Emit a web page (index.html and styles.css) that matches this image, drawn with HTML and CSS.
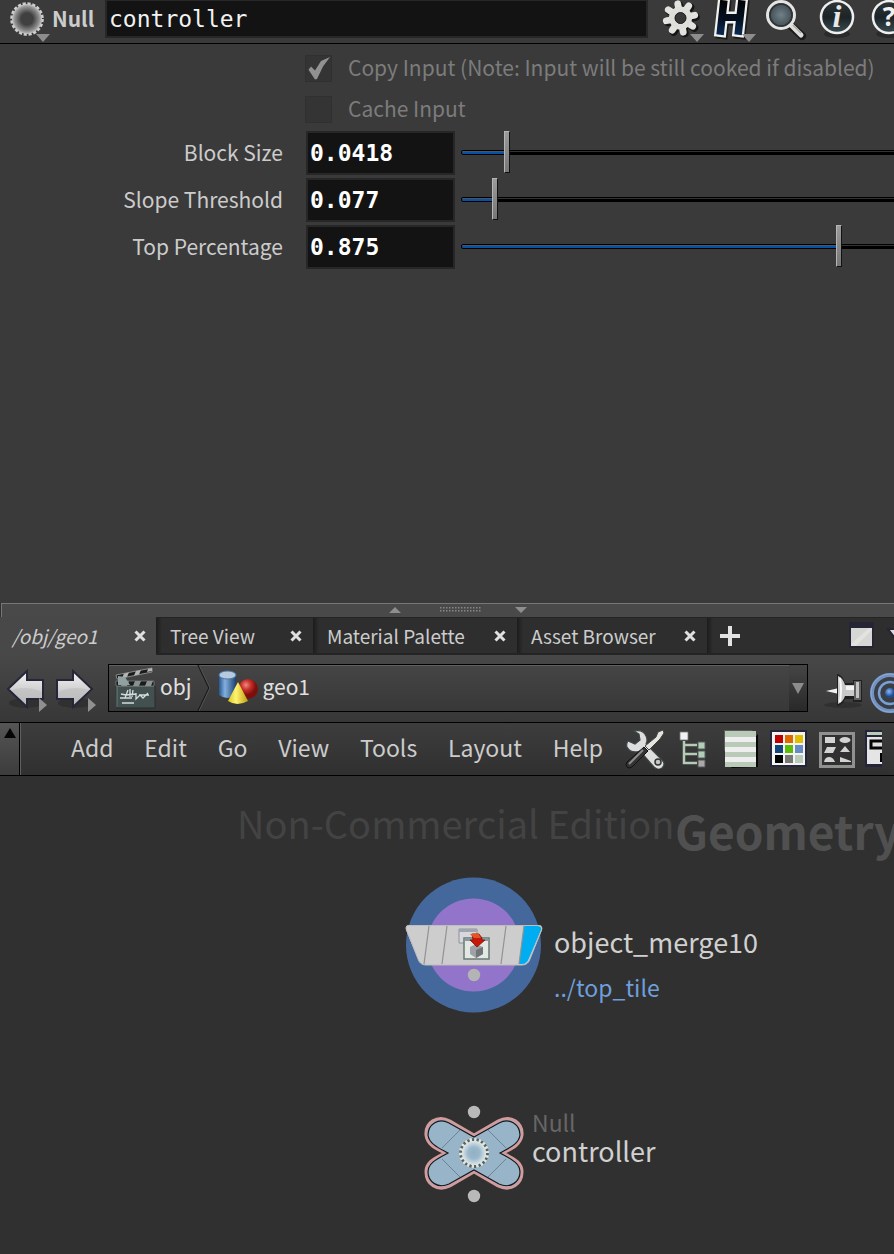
FILE: index.html
```html
<!DOCTYPE html>
<html lang="en">
<head>
<meta charset="utf-8">
<meta name="viewport" content="width=device-width, initial-scale=1">
<title>Geometry network</title>
<link rel="stylesheet" href="styles.css">
</head>
<body>
<svg class="defs" width="0" height="0" aria-hidden="true">
  <defs>
    <radialGradient id="ring"><stop offset="0.4" stop-color="#404040"/><stop offset="0.8" stop-color="#8c8c8c"/><stop offset="1" stop-color="#c4c4c4"/></radialGradient>
    <radialGradient id="ringBlue"><stop offset="0" stop-color="#91b0c4"/><stop offset="0.45" stop-color="#9ab8ca"/><stop offset="0.85" stop-color="#d3dfe6"/><stop offset="1" stop-color="#e4ebee"/></radialGradient>
    <linearGradient id="steel" x2="0" y2="1"><stop offset="0" stop-color="#f4f4f4"/><stop offset="0.55" stop-color="#cfcfcf"/><stop offset="1" stop-color="#b4b4b4"/></linearGradient>
    <linearGradient id="navy" gradientUnits="userSpaceOnUse" x1="0" y1="0" x2="0" y2="36"><stop offset="0" stop-color="#020305"/><stop offset="0.5" stop-color="#04101f"/><stop offset="1" stop-color="#0b2c58"/></linearGradient>
    <radialGradient id="lens"><stop offset="0" stop-color="#718088"/><stop offset="1" stop-color="#3c464c"/></radialGradient>
    <linearGradient id="disc" x2="0" y2="1"><stop offset="0" stop-color="#303638"/><stop offset="0.5" stop-color="#1b2427"/><stop offset="1" stop-color="#394c50"/></linearGradient>
    <linearGradient id="can"><stop offset="0" stop-color="#27578f"/><stop offset="0.35" stop-color="#84b0df"/><stop offset="1" stop-color="#1c416f"/></linearGradient>
    <radialGradient id="ball" cx="0.4" cy="0.3"><stop offset="0" stop-color="#ef8a80"/><stop offset="0.5" stop-color="#c62f28"/><stop offset="1" stop-color="#7c0f0d"/></radialGradient>
    <linearGradient id="cone"><stop offset="0" stop-color="#d8c41e"/><stop offset="0.4" stop-color="#fff372"/><stop offset="1" stop-color="#bd9d0c"/></linearGradient>
    <radialGradient id="dot" cx="0.4" cy="0.35"><stop offset="0" stop-color="#8db8ee"/><stop offset="1" stop-color="#1c4c98"/></radialGradient>
  </defs>
</svg>
<div class="app">
  <section class="params" aria-label="Parameters">
    <header class="titlebar">
      <svg class="type-icon" width="44" height="43" viewBox="0 0 44 43" aria-hidden="true">
        <circle cx="19" cy="19" r="15" fill="url(#ring)"/>
        <circle cx="19" cy="19" r="15.6" fill="none" stroke="#cecece" stroke-width="2.4" stroke-dasharray="3.2 1.7"/>
        <path d="M28 34h14l-7 8z" fill="#8d8d8d"/>
      </svg>
      <label class="type-name" for="node-name">Null</label>
      <input class="name-field" id="node-name" type="text" value="controller" spellcheck="false">
      <div class="title-tools">
        <button type="button" aria-label="Gear menu"><svg width="44" height="43" viewBox="0 0 44 43">
          <g transform="translate(22 19.500)" stroke="#141414" stroke-width="8" stroke-linecap="round"><path d="M0-9V-14M0 9V14M-9 0H-14M9 0H14M6.400-6.400L10.500-10.500M-6.400-6.400L-10.500-10.500M6.400 6.400L10.500 10.500M-6.400 6.400L-10.500 10.500" transform="rotate(-11)"/></g>
          <g transform="translate(20.500 18)"><g stroke="#e2e2df" stroke-width="6.800" stroke-linecap="round"><path d="M0-9V-14.500M0 9V14.500M-9 0H-14.500M9 0H14.500M6.400-6.400L10.400-10.400M-6.400-6.400L-10.400-10.400M6.400 6.400L10.400 10.400M-6.400 6.400L-10.400 10.400" transform="rotate(-11)"/></g>
          <circle r="8.500" fill="#3b3b3b" stroke="#dededb" stroke-width="6"/><circle r="5.500" fill="#383838" stroke="#222" stroke-width="1"/></g>
          <path d="M30 34h14l-7 8z" fill="#8d8d8d"/></svg></button>
        <button type="button" aria-label="Houdini menu"><svg width="44" height="43" viewBox="0 0 44 43">
          <path d="M11.500 4L8.500 31M29.500 4L26.500 31M11 17.500H27" transform="translate(1.500 2)" fill="none" stroke="#1c1c1c" stroke-width="12" stroke-linecap="square"/>
          <path d="M11.500 4L8.500 31M29.500 4L26.500 31M11 17.500H27" fill="none" stroke="#f2f2f0" stroke-width="12" stroke-linecap="square"/>
          <path d="M11.500 4L8.500 31M29.500 4L26.500 31" fill="none" stroke="url(#navy)" stroke-width="7.500" stroke-linecap="square"/>
          <path d="M10 17.500H28" stroke="#050e1c" stroke-width="7"/>
          <path d="M30 34h14l-7 8z" fill="#8d8d8d"/></svg></button>
        <button type="button" aria-label="Search"><svg width="44" height="43" viewBox="0 0 44 43">
          <path d="M26 25L38 36" stroke="#1c1c1c" stroke-width="8" stroke-linecap="round"/>
          <path d="M26 24L37 35" stroke="#deddda" stroke-width="5" stroke-linecap="round"/><path d="M29 25L37 33" stroke="#a9a9a4" stroke-width="1.500"/>
          <circle cx="17" cy="15" r="13.500" fill="url(#lens)" stroke="#e4e4e2" stroke-width="3"/><circle cx="17" cy="15" r="11" fill="none" stroke="#2c3336" stroke-width="1.500"/></svg></button>
        <button type="button" aria-label="Info"><svg width="44" height="43" viewBox="0 0 44 43">
          <ellipse cx="21" cy="34" rx="13" ry="4" fill="#2a2a2a"/><circle cx="21" cy="17" r="16" fill="url(#disc)" stroke="#efefef" stroke-width="2.500"/>
          <text class="glyph-i" x="21" y="27">i</text></svg></button>
        <button type="button" aria-label="Help"><svg width="44" height="43" viewBox="0 0 44 43">
          <ellipse cx="21" cy="34" rx="13" ry="4" fill="#2a2a2a"/><circle cx="21" cy="17" r="16" fill="url(#disc)" stroke="#efefef" stroke-width="2.500"/>
          <text class="glyph-q" x="21" y="26">?</text></svg></button>
      </div>
    </header>

    <form class="param-list">
      <div class="check-row">
        <input class="check" id="copy" type="checkbox" checked disabled>
        <label for="copy">Copy Input (Note: Input will be still cooked if disabled)</label>
      </div>
      <div class="check-row">
        <input class="check" id="cache" type="checkbox" disabled>
        <label for="cache">Cache Input</label>
      </div>
      <div class="param-row">
        <label for="block">Block Size</label>
        <input class="num" id="block" type="text" value="0.0418">
        <input class="slider" type="range" aria-label="Block Size" min="0" max="0.42" step="any" value="0.0418" style="--fill: 10%">
      </div>
      <div class="param-row">
        <label for="slope">Slope Threshold</label>
        <input class="num" id="slope" type="text" value="0.077">
        <input class="slider" type="range" aria-label="Slope Threshold" min="0" max="1.08" step="any" value="0.077" style="--fill: 7.1%">
      </div>
      <div class="param-row">
        <label for="top">Top Percentage</label>
        <input class="num" id="top" type="text" value="0.875">
        <input class="slider" type="range" aria-label="Top Percentage" min="0" max="1" step="any" value="0.875" style="--fill: 87.5%">
      </div>
    </form>
  </section>

  <div class="splitter" role="separator">
    <svg width="138" height="12" viewBox="0 0 138 12" aria-hidden="true">
      <defs><pattern id="grip" width="3" height="3" patternUnits="userSpaceOnUse"><rect width="1.500" height="1.500" fill="#858585"/></pattern></defs>
      <path d="M0 9h12L6 3zM126 3h12l-6 6z" fill="#8e8e8e"/>
      <rect x="51" y="3" width="42" height="6" fill="url(#grip)"/>
    </svg>
  </div>

  <nav class="tabs" aria-label="Pane tabs">
    <div class="tab tab-path active"><a href="#net">/obj/geo1</a><button type="button" class="close" aria-label="Close /obj/geo1"><svg width="12" height="12" viewBox="0 0 12 12"><path d="M1.500 1.500l9 9M10.500 1.500l-9 9"/></svg></button></div>
    <div class="tab tab-tree"><a href="#tree">Tree View</a><button type="button" class="close" aria-label="Close Tree View"><svg width="12" height="12" viewBox="0 0 12 12"><path d="M1.500 1.500l9 9M10.500 1.500l-9 9"/></svg></button></div>
    <div class="tab tab-material"><a href="#material">Material Palette</a><button type="button" class="close" aria-label="Close Material Palette"><svg width="12" height="12" viewBox="0 0 12 12"><path d="M1.500 1.500l9 9M10.500 1.500l-9 9"/></svg></button></div>
    <div class="tab tab-asset"><a href="#asset">Asset Browser</a><button type="button" class="close" aria-label="Close Asset Browser"><svg width="12" height="12" viewBox="0 0 12 12"><path d="M1.500 1.500l9 9M10.500 1.500l-9 9"/></svg></button></div>
    <div class="tab-tail">
      <button type="button" aria-label="New tab"><svg width="20" height="20" viewBox="0 0 20 20"><path d="M10 0v20M0 10h20" stroke="#e2e2e2" stroke-width="4"/></svg></button>
      <button type="button" class="maximize" aria-label="Maximize pane"><svg width="45" height="38" viewBox="0 0 45 38">
        <rect y="5" width="25" height="26" fill="#252535"/><rect x="2" y="11" width="21" height="18" fill="#d6d6d4"/><path d="M2 29V27L20 11h3v2L7 29z" fill="#e2e2de"/>
        <path d="M39 12h12l-6 8z" fill="#dcdcdc" stroke="#252535" stroke-width="2"/></svg></button>
    </div>
  </nav>

  <div class="pathbar">
    <button type="button" aria-label="Back"><svg width="41" height="48" viewBox="0 4 41 48">
      <ellipse cx="19" cy="38" rx="17" ry="5" fill="#303030"/><path d="M1 24L20 6V15H36V34H20V42z" fill="url(#steel)" stroke="#26263a" stroke-width="2"/><path d="M4 25Q20 20 35 27V33H19V39z" fill="#bdbdbd" opacity=".6"/><path d="M32 33v14l8-7z" fill="#909090"/></svg></button>
    <button type="button" aria-label="Forward"><svg width="41" height="48" viewBox="0 4 41 48">
      <ellipse cx="19" cy="38" rx="17" ry="5" fill="#303030"/><path d="M36 24L17 6V15H1V34H17V42z" fill="url(#steel)" stroke="#26263a" stroke-width="2"/><path d="M33 25Q17 20 2 27V33H18V39z" fill="#bdbdbd" opacity=".6"/><path d="M32 33v14l8-7z" fill="#909090"/></svg></button>
    <div class="path-field">
      <a class="crumb" href="#obj"><svg width="42" height="46" viewBox="0 0 42 46">
        <path d="M1 21h39v22H2z" fill="#435050" stroke="#242d2e"/><path d="M1 21h38M2 22v20" stroke="#6e7e7e"/>
        <path d="M1 16h38v5H1z" fill="#191b1b" stroke="#858d8d" stroke-width=".7"/><path d="M8 16h6l-2 5H6zM20 16h6l-2 5h-6zM32 16h6l-2 5h-6z" fill="#8a9090"/>
        <path d="M1 10L37 3v4L2 14z" fill="#191b1b" stroke="#a0a0a0" stroke-width=".8"/><path d="M9 8.500l5-1-2 4.500-5 1zM21 6l5-1-2 4.500-5 1zM33 4l4-1v3l-5 1z" fill="#b4b4b4"/>
        <path d="M3 11l7 1 5 8H3z" fill="#91a0a0"/>
        <path d="M6 29l5 1 10-1M13 25l-3 8M15 24v8M18 25l-1 7M21 28v6l4-4 3 3 5-5M5 33h12M24 30h10M7 38h12" fill="none" stroke="#d5dcdc" stroke-width="1.300"/></svg>obj</a>
      <svg class="chevron" width="14" height="46" viewBox="0 0 14 46" aria-hidden="true"><path d="M1 0l11 23L1 46" fill="none" stroke="#1b1b1b" stroke-width="1.500"/><path d="M2 0l11 23L2 46" fill="none" stroke="#555"/></svg>
      <a class="crumb geo" href="#geo1"><svg width="41" height="46" viewBox="0 0 41 46">
        <path d="M1 10v20q8 6 17 0V10z" fill="url(#can)"/><ellipse cx="9.500" cy="10" rx="8.500" ry="4" fill="#b6c9df" stroke="#4a76a8"/>
        <circle cx="30" cy="24" r="10" fill="url(#ball)"/><path d="M20 17L10 36q9 6 20 0z" fill="url(#cone)"/></svg>geo1</a>
      <button type="button" class="path-drop" aria-label="Path history"><svg width="12" height="11" viewBox="0 0 12 11"><path d="M0 0h12L6 11z" fill="#8c8c8c"/></svg></button>
    </div>
    <button type="button" class="pin" aria-label="Pin pane"><svg width="40" height="48" viewBox="0 5 40 48">
      <ellipse cx="19" cy="41" rx="19" ry="3" fill="#303030"/><path d="M2 27l13-3v6z" fill="#f2f2f2"/><path d="M13 10q5 0 8 9h8v-3h9v22h-9v-3h-8q-2 6-8 7z" fill="#202020"/><path d="M14 12q5 2 7 9h9v11h-9q-2 6-7 8z" fill="#cacaca"/><path d="M16 14q2 12 0 24" stroke="#f8f8f8" stroke-width="2" fill="none"/><path d="M22 22h9v4h-9z" fill="#f4f4f4"/><path d="M30 17h7v19h-7z" fill="#606060"/><path d="M32 18h3v16h-3z" fill="#c3c3c3"/></svg></button>
    <button type="button" class="follow" aria-label="Follow selection"><svg width="42" height="48" viewBox="0 0 42 48">
      <g fill="none"><circle cx="20" cy="24" r="18" stroke="#7192c2" stroke-width="4" fill="#3a3f46"/><circle cx="20" cy="24" r="19" stroke="#8facd5"/><circle cx="20" cy="24" r="11" stroke="#7ba0d5" stroke-width="2.500"/></g><circle cx="20" cy="24" r="5" fill="url(#dot)"/></svg></button>
  </div>

  <div class="menubar">
    <button type="button" class="grip" aria-label="Collapse toolbar"><svg width="12" height="10" viewBox="0 0 12 10"><path d="M0 10h12L6 0z" fill="#050505"/></svg></button>
    <div class="menus">
      <button type="button">Add</button><button type="button">Edit</button><button type="button">Go</button><button type="button">View</button><button type="button">Tools</button><button type="button">Layout</button><button type="button">Help</button>
    </div>
    <div class="net-tools">
      <button type="button" aria-label="Network tools"><svg width="40" height="40" viewBox="0 0 40 40">
        <path d="M3 12l7 3 5-4-1-6-5-3q9-2 12 5 2 4 0 8l16 16q4 4 0 8-4 3-8-1L15 22q-9 3-13-4-1-3 1-6z" fill="#dedede" stroke="#3d4747" stroke-width="1.200"/><circle cx="33" cy="33" r="3" fill="#c5c5c5" stroke="#333" stroke-width="1.500"/>
        <path d="M33 3l5-2 1 3-4 6-11 11-4-4L31 8z" fill="#e5e5df" stroke="#414141"/><path d="M19 18l4 4L7 38q-3 2-5 0-2-2 0-5z" fill="#333" stroke="#111"/><path d="M18 21L4 35" stroke="#8c8c8c" stroke-width="2"/></svg></button>
      <button type="button" aria-label="Tree view"><svg width="28" height="40" viewBox="0 0 28 40">
        <path d="M1 3h8v8H1z" fill="#f2f2f2" stroke="#777" stroke-width=".8"/><path d="M5 12v22h13M5 16h13M5 25h13" fill="none" stroke="#b5cbb8" stroke-width="2.500"/><path d="M19 13h7v7h-7zM19 22h7v7h-7z" fill="#b4cdb9" stroke="#53615c"/><path d="M19 31h7v7h-7z" fill="#a9a9a9" stroke="#555"/></svg></button>
      <button type="button" aria-label="List view"><svg width="36" height="40" viewBox="0 0 36 40">
        <path d="M1 1h29L1 22z" fill="#5b5b5b"/><path d="M8 39l27-1V5z" fill="#080808"/><path d="M2 2h31v36H2z" fill="#b9cbb8"/><path d="M2 8h31v5H2zM2 18h31v5H2zM2 28h31v5H2z" fill="#eee"/></svg></button>
      <button type="button" aria-label="Color palette"><svg width="38" height="40" viewBox="0 0 38 40">
        <path d="M0 1h37v37H0z" fill="#24243a"/><path d="M2 3h33v33H2z" fill="#f3f3f1"/><path d="M5 6h8v8H5z" fill="#c00000"/><path d="M15 6h8v8h-8z" fill="#e06800"/><path d="M25 6h8v8h-8z" fill="#dfbf00"/><path d="M5 16h8v8H5z" fill="#10467c"/><path d="M15 16h8v8h-8z" fill="#5fbb09"/><path d="M25 16h8v8h-8z" fill="#678cc5"/><path d="M5 26h8v8H5z"/><path d="M15 26h8v8h-8z" fill="#777"/><path d="M25 26h8v8h-8z" fill="#b9ccba"/></svg></button>
      <button type="button" aria-label="Shape palette"><svg width="36" height="40" viewBox="0 0 36 40">
        <path d="M1.500 4.500h33v33h-33z" fill="#303030" stroke="#8e918e" stroke-width="3"/><path d="M6 8h10v6H6zM8 18h9l-3 6H5zM21 23l5-6 5 6zM5 33q1-5 5-5t6 5zM21 28l11 4v1H21z" fill="#d2d2d2"/><ellipse cx="26" cy="11" rx="5.500" ry="3" fill="#d2d2d2"/></svg></button>
      <button type="button" aria-label="Sticky note"><svg width="40" height="40" viewBox="0 0 40 40">
        <path d="M0 1h38v37H0z" fill="#24243a"/><path d="M2 3h34v3H2z" fill="#b9ccba"/><path d="M2 8h34v27H2z" fill="#e5e5e5"/><path d="M30 12H6v7h24" fill="#ddd" stroke="#050505" stroke-width="3"/><path d="M15 24h8v9h-8z"/></svg></button>
    </div>
  </div>

  <main class="canvas" id="net">
    <div class="watermark">Non-Commercial Edition</div>
    <div class="context">Geometry</div>
    <div class="node merge">
      <svg width="138" height="138" viewBox="0 0 138 138" aria-hidden="true">
        <circle cx="68.500" cy="69" r="67.500" fill="#45689c"/><circle cx="68.500" cy="69" r="46.500" fill="#9275cb"/>
        <path d="M4 49H133q5 0 4 5L125 83q-2 6-8 6H21q-6 0-8-6L1 54q-1-5 3-5z" fill="#cdcdcd"/>
        <path d="M119 50h13q5 0 4 4L124 82q-2 6-7 6h-3z" fill="#00adf0"/>
        <path d="M4 49.500H133q5 0 3.500 4.500L125 83q-2 6-8 6H21q-6 0-8-6L1.500 54q-1.500-4.500 2.500-4.500z" fill="none" stroke="#bdbdbd"/>
        <path d="M24 50l-5 38M42 50l-5 38M101 50l-5 38M119 50l-5 38" stroke="#929292" stroke-width="1.200"/>
        <path d="M54 53h18v14H54z" fill="#d7d7dc" stroke="#8c929c"/><path d="M54 53h18v3H54z" fill="#9da5b1"/>
        <path d="M59 62h25v21H59z" fill="#e3e8e2" stroke="#687a77" stroke-width="1.500"/><path d="M60 62h23v3H60z" fill="#8c969d"/>
        <path d="M65 71l6-3 7 3v7l-7 4-6-4z" fill="#9da2a6"/><path d="M71 74l7-3v7l-7 4z" fill="#6f7578"/>
        <path d="M67 58h7l3 4v2h3l-8 7-7-7h3z" fill="#c61708" stroke="#750b05" stroke-width=".7"/><path d="M65 58l8-1 3 5h-7z" fill="#e35427"/>
        <circle cx="69" cy="99" r="6.200" fill="#b4b4b4"/>
      </svg>
      <div class="node-text"><span class="node-name">object_merge10</span><a class="node-ref" href="#top_tile">../top_tile</a></div>
    </div>
    <div class="node null">
      <svg width="100" height="98" viewBox="0 0 100 98" aria-hidden="true">
        <circle cx="50" cy="7" r="6.200" fill="#b9b9b9"/><circle cx="50" cy="91" r="6.200" fill="#b9b9b9"/>
        <path d="M50 30L74 16C87 9 99 18 98 30C97 40 87 44 79 48C90 54 98 57 98 67C98 79 87 87 74 81L50 67L26 81C13 87 2 79 2 67C2 57 10 54 21 48C13 44 3 40 2 30C1 18 13 9 26 16z" fill="#98b4c8" stroke="#d29c9e" stroke-width="3"/>
        <path d="M50 32L75 18C86 12 96 20 96 30C95 39 85 43 76 48C87 54 96 58 96 67C96 77 86 84 75 79L50 65L25 79C14 84 4 77 4 67C4 58 13 54 24 48C15 43 5 39 4 30C4 20 14 12 25 18z" fill="#98b4c8" stroke="#15191c" stroke-width="1.200"/>
        <path d="M36 25L18 43M64 25l18 18M18 54l18 18M82 54L64 72" stroke="#6b8596"/>
        <circle cx="50" cy="48" r="13" fill="url(#ringBlue)"/><circle cx="50" cy="48" r="13.500" fill="none" stroke="#e0e8d8" stroke-width="3"/><circle cx="50" cy="48" r="13.500" fill="none" stroke="#596069" stroke-width="2.800" stroke-dasharray="2.300 2.400"/>
      </svg>
      <div class="node-text"><span class="node-type">Null</span><span class="node-name">controller</span></div>
    </div>
  </main>
</div>
</body>
</html>
```
FILE: styles.css
```css
* { box-sizing: border-box; }

body {
  margin: 0;
  background: #303030;
  color: #cccccc;
  font-family: "Noto Sans CJK SC", "Noto Sans", sans-serif;
  font-size: 21px;
  line-height: 32px;
}

button, input { font: inherit; color: inherit; margin: 0; }
button { padding: 0; border: 0; background: none; display: block; flex: none; }
svg { display: block; flex: none; }
a { color: inherit; text-decoration: none; }
.defs { position: absolute; }

.app {
  display: flex;
  flex-direction: column;
  min-height: 100vh;
  overflow: hidden;
}

/* Parameter pane */
.params { flex: 603 0 0; background: #3a3a3a; }

.titlebar {
  display: flex;
  align-items: flex-start;
  height: 44px;
  padding-left: 8px;
  border-bottom: 1px solid #000;
  overflow: hidden;
}
.type-name { width: 53px; padding-top: 2px; font-weight: 700; }
.name-field {
  flex: 1;
  min-width: 0;
  height: 38px;
  padding: 0 2px;
  border: 2px solid #272727;
  border-top-width: 1px;
  background: #131313;
  color: #f2f2f2;
  font-family: "DejaVu Sans Mono", monospace;
  font-size: 23px;
}
.title-tools { display: flex; gap: 8px; flex: none; width: 246px; padding-left: 12px; overflow: hidden; }
.glyph-i { font: italic 700 32px "Liberation Serif", serif; fill: #e8e8e8; text-anchor: middle; }
.glyph-q { font: 700 26px "Open Sans", sans-serif; fill: #f0f0f0; text-anchor: middle; }

.param-list { padding-top: 4px; }
.check-row {
  display: flex;
  align-items: center;
  gap: 16px;
  height: 41px;
  padding-left: 305px;
  color: #7c7c7c;
  white-space: nowrap;
}
.check-row label { padding-bottom: 4px; }
.check {
  appearance: none;
  flex: none;
  width: 27px;
  height: 27px;
  border: 1px solid #303030;
  background: #343434;
}
.check:checked::before {
  content: "";
  display: block;
  width: 25px;
  height: 25px;
  background: #919191;
  clip-path: polygon(10% 55%, 20% 42%, 36% 58%, 60% 20%, 96% 4%, 68% 42%, 44% 92%, 36% 94%);
}
.param-row {
  display: grid;
  grid-template-columns: 283px 149px 1fr;
  align-items: end;
  height: 47px;
  padding-bottom: 2px;
}
.param-row label { text-align: right; line-height: 40px; padding-bottom: 3px; }
.num {
  width: 149px;
  height: 44px;
  margin-left: 23px;
  padding: 0 2px;
  border: 2px solid #272727;
  background: #131313;
  color: #ffffff;
  font-family: "DejaVu Sans Mono", monospace;
  font-size: 23px;
  font-weight: 700;
}
.slider {
  appearance: none;
  height: 44px;
  margin: 0 -2px 0 29px;
  padding-bottom: 2px;
  background: none;
}
.slider::-webkit-slider-runnable-track {
  height: 5px;
  border: 1px solid #000;
  border-radius: 2px;
  background:
    linear-gradient(#4a5666, #4a5666) 0 0 / var(--fill) 1px no-repeat,
    linear-gradient(#0650a6, #0650a6) 0 0 / var(--fill) 3px no-repeat,
    linear-gradient(#333 1px, #000 1px);
}
.slider::-webkit-slider-thumb {
  appearance: none;
  width: 6px;
  height: 42px;
  margin-top: -20px;
  border: 1px solid #111;
  border-color: #b5b5b5 #111 #111 #b5b5b5;
  background: linear-gradient(#9a9a9a, #777);
}

/* Pane divider */
.splitter {
  display: flex;
  justify-content: center;
  height: 14px;
  margin-left: 1px;
  padding-left: 20px;
  border: 1px solid #777;
  border-width: 1px 0 0 1px;
  background: #494949;
}

/* Tabs */
.tabs { display: flex; height: 38px; background: #484848; white-space: nowrap; }
.tab, .tab-tail {
  display: flex;
  align-items: center;
  justify-content: space-between;
  padding: 0 11px 0 14px;
  border-bottom: 2px solid #242424;
  border-top: 1px solid #242424;
  background: linear-gradient(90deg, #1c1c1c, #2e2e2e 6px);
}
.tab { flex: none; font-size: 19px; }
.tab.active { padding: 0 10px 0 12px; background: #484848; border-color: transparent; font-style: italic; }
.tab-path { width: 156px; }
.tab-tree { width: 157px; }
.tab-material { width: 204px; }
.tab-asset { width: 190px; }
.tab-tail { flex: 1; min-width: 0; padding: 0 0 0 13px; overflow: hidden; }
.close svg { fill: none; stroke: #e0e0e0; stroke-width: 3; }

/* Path bar */
.pathbar {
  display: flex;
  height: 68px;
  padding: 9px 0 0 7px;
  border-bottom: 1px solid #000;
  background: linear-gradient(#484848, #373737);
  overflow: hidden;
}
.pathbar > button + button { margin-left: 8px; }
.path-field {
  display: flex;
  flex: 1;
  min-width: 0;
  height: 48px;
  margin-left: 11px;
  border: 1px solid #000;
  background: linear-gradient(#454545, #383838);
  box-shadow: inset 0 1px #606060;
  color: #e0e0e0;
  line-height: 42px;
}
.crumb { display: flex; gap: 3px; padding-left: 6px; }
.crumb.geo { padding-left: 7px; }
.chevron { margin-left: 6px; }
.path-drop {
  display: grid;
  place-items: center;
  width: 18px;
  margin-left: auto;
  background: linear-gradient(#454545, #292929);
}
.pathbar > .pin { margin-left: 16px; }
.pathbar > .follow { width: 24px; margin-left: 6px; overflow: hidden; }

/* Menus and network tools */
.menubar {
  display: flex;
  height: 53px;
  border-bottom: 1px solid #000;
  background: linear-gradient(#3d3d3d, #303030);
}
.grip {
  display: flex;
  justify-content: center;
  width: 20px;
  padding-top: 5px;
  border-right: 1px solid #000;
  background: linear-gradient(#555, #3c3c3c);
}
.menus {
  display: flex;
  flex: 1;
  align-items: center;
  justify-content: space-between;
  padding: 0 18px 4px 50px;
  border-left: 1px solid #606060;
  font-size: 23px;
}
.net-tools {
  display: grid;
  grid-template-columns: repeat(6, 48px);
  align-items: center;
  justify-items: center;
  width: 261px;
  margin-right: 12px;
  overflow: hidden;
}

/* Network canvas */
.canvas { position: relative; flex: 478 0 0; background: #303030; overflow: hidden; }
.watermark, .context, .node { position: absolute; white-space: nowrap; }
.watermark { left: 237px; top: 19px; font-size: 38px; line-height: 56px; color: #434343; }
.context { left: 675px; top: 22px; font-size: 46px; line-height: 64px; font-weight: 700; color: #505050; }
.node { display: flex; }
.node-text { display: flex; flex-direction: column; }
.node-name { font-size: 27px; color: #d0d0d0; }
.merge { left: 405px; top: 100px; gap: 11px; }
.merge .node-text { gap: 13px; padding-top: 50px; }
.node-ref { font-size: 23px; color: #6f9fdc; }
.null { left: 424px; top: 329px; gap: 8px; }
.null .node-text { padding-top: 2px; }
.null .node-name { line-height: 28px; }
.node-type { font-size: 23px; line-height: 30px; color: #666666; }
```
